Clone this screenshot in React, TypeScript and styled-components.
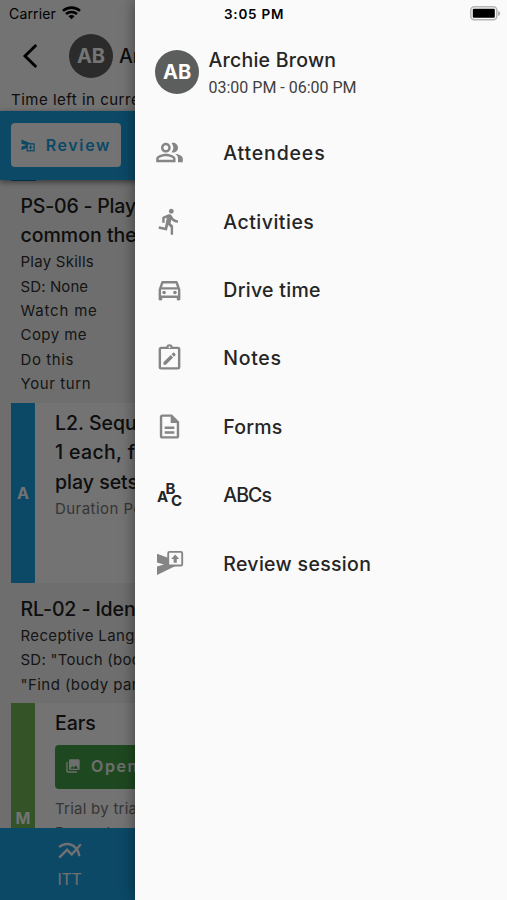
import React from "react";
import styled, { createGlobalStyle } from "styled-components";
import {
  MdOutlinePeopleAlt,
  MdDirectionsRun,
  MdOutlineDirectionsCar,
  MdOutlineDescription,
  MdMultilineChart,
  MdPhotoLibrary,
} from "react-icons/md";

const GlobalStyle = createGlobalStyle`
  * { box-sizing: border-box; }
  body { margin: 0; background: #fafafa; font-family: Inter, Roboto, sans-serif; }
`;

const Screen = styled.div`
  position: relative;
  width: 507px;
  height: 900px;
  overflow: hidden;
  background: #fafafa;
  white-space: nowrap;
`;

const Page = styled.main`
  display: flex;
  flex-direction: column;
  width: 507px;
  height: 900px;
  background: #f0f0f0;
  color: #202020;
`;

const Header = styled.header`
  flex: none;
  height: 111px;
  padding-top: 3px;
  background: #fafafa;
`;

const Carrier = styled.div`
  display: flex;
  align-items: center;
  gap: 6px;
  height: 20px;
  padding-left: 9px;
  font-size: 14px;
  letter-spacing: 0.15px;
  color: #000;
`;

const ClientRow = styled.div`
  display: flex;
  align-items: center;
  height: 65px;
  padding-left: 21px;
`;

const Avatar = styled.div<{ $color: string }>`
  flex: none;
  width: 44px;
  height: 44px;
  border-radius: 50%;
  background: ${(p) => p.$color};
  color: #fff;
  font: 700 20px/44px Inter, sans-serif;
  text-align: center;
`;

const ClientName = styled.div`
  margin-left: 6px;
  font-size: 19.5px;
  font-weight: 500;
`;

const TimeLeft = styled.div`
  padding-left: 11px;
  font-size: 15px;
  line-height: 24px;
  letter-spacing: 0.5px;
`;

const ActionBar = styled.div`
  position: relative;
  flex: none;
  height: 69px;
  padding: 12px 11px;
  background: #189fe0;
  box-shadow: 0 2px 6px rgba(0, 0, 0, 0.5);
`;

const Button = styled.button<{ $kind: "light" | "green" }>`
  display: flex;
  align-items: center;
  gap: ${(p) => (p.$kind === "light" ? 11 : 10)}px;
  width: ${(p) => (p.$kind === "light" ? 110 : 240)}px;
  height: 44px;
  padding: 0 10px 1px;
  border: 0;
  border-radius: 4px;
  background: ${(p) => (p.$kind === "light" ? "#fafafa" : "#43a047")};
  color: ${(p) => (p.$kind === "light" ? "#189fe0" : "#f0f0f0")};
  font: 600 16px/40px Inter, sans-serif;
  letter-spacing: 1.6px;
`;

const List = styled.div`
  flex: 1;
  min-height: 0;
  overflow: hidden;
`;

const PreviousCard = styled.div`
  width: 25px;
  height: 1px;
  margin-left: 11px;
  background: #189fe0;
`;

const Group = styled.section<{ $top: number; $height: number }>`
  height: ${(p) => p.$height}px;
  padding: ${(p) => p.$top}px 0 0 20.5px;
`;

const Title = styled.div<{ $spacing?: number }>`
  font-size: 19.5px;
  font-weight: 500;
  line-height: 29.3px;
  letter-spacing: ${(p) => p.$spacing ?? 0}px;
`;

const Detail = styled.div<{ $spacing?: number }>`
  font-size: 15px;
  line-height: 24.4px;
  letter-spacing: ${(p) => p.$spacing ?? 0.25}px;
  color: #303030;
`;

const Card = styled.article<{ $height: number }>`
  display: flex;
  height: ${(p) => p.$height}px;
  margin-left: 11px;
  background: #fafafa;
`;

const Stripe = styled.div<{ $color: string }>`
  display: flex;
  align-items: center;
  justify-content: center;
  width: 24px;
  background: ${(p) => p.$color};
  color: #fafafa;
  font-size: 16px;
  font-weight: 700;
`;

const CardBody = styled.div`
  padding: 6px 0 0 20px;
`;

const Muted = styled(Detail)`
  color: #757575;
`;

const ResultLine = styled(Muted)`
  line-height: 22.4px;
`;

const ButtonSlot = styled.div`
  padding: 6.5px 0 8.5px;
`;

const BottomBar = styled.nav`
  position: relative;
  flex: none;
  display: flex;
  height: 72px;
  background: #189fe0;
`;

const Tab = styled.div`
  display: flex;
  flex-direction: column;
  align-items: center;
  width: 139px;
  padding-top: 9px;
  color: #f5f5f5;
  font-size: 16px;
  letter-spacing: -0.4px;
  line-height: 29px;
`;

const Scrim = styled.div`
  position: absolute;
  inset: 0;
  background: rgba(0, 0, 0, 0.54);
`;

const Drawer = styled.aside`
  position: absolute;
  inset: 0 0 0 135.4px;
  display: flex;
  flex-direction: column;
  background: #fafafa;
  box-shadow: 0 0 14px rgba(0, 0, 0, 0.45);
  color: #252525;
`;

const StatusRow = styled.div`
  display: flex;
  align-items: center;
  justify-content: space-between;
  height: 27px;
  padding: 0 6px 0 88.6px;
  font-size: 13.5px;
  font-weight: 600;
  letter-spacing: 0.75px;
  color: #000;
`;

const Profile = styled.div`
  display: flex;
  gap: 9.4px;
  height: 92px;
  padding: 23px 0 0 19.7px;
`;

const ProfileText = styled.div`
  margin-top: -2px;
`;

const ProfileName = styled.div`
  font-size: 19.5px;
  font-weight: 500;
  line-height: 25px;
  letter-spacing: 0.25px;
`;

const Hours = styled.div`
  font: 16px/27px Roboto, sans-serif;
  padding-top: 1px;
  color: #404040;
`;

const MenuItem = styled.div`
  display: flex;
  align-items: center;
  height: 68.4px;
  padding-left: 19.7px;
`;

const MenuIcon = styled.div`
  display: flex;
  width: 68.2px;
  padding-bottom: 1px;
  color: #858585;
`;

const MenuLabel = styled.div<{ $spacing: number }>`
  font-size: 19.5px;
  font-weight: 500;
  letter-spacing: ${(p) => p.$spacing}px;
`;

const WifiIcon = () => (
  <svg width="19" height="14" viewBox="0 0 19 14" fill="none" stroke="#000" strokeWidth="2.6">
    <path d="M1 4.9C5.7.5 13.3.5 18 4.9M4 8.1c3.2-2.8 7.8-2.8 11 0" />
    <path d="m9.5 13.2-3-3c1.7-1.6 4.3-1.6 6 0Z" fill="#000" stroke="none" />
  </svg>
);

const BatteryIcon = () => (
  <svg width="31" height="15" viewBox="0 0 31 15">
    <rect x=".8" y=".8" width="26" height="13" rx="3.5" fill="#fafafa" stroke="#b5b5b5" strokeWidth="1.5" />
    <rect x="2.8" y="2.8" width="22" height="9" rx="1" fill="#000" />
    <path d="M28 5c3 1 3 4 0 5Z" fill="#b5b5b5" />
  </svg>
);

const BackIcon = () => (
  <svg width="48" height="28" viewBox="0 0 48 28" fill="none" stroke="#000" strokeWidth="2.9">
    <path d="M15.2 3 4 14l11.2 11" />
  </svg>
);

const NotesIcon = () => (
  <svg width="29" height="29" viewBox="0 0 24 24" fill="currentColor">
    <path
      fillRule="evenodd"
      d="M5 3h4.2a3 3 0 0 1 5.6 0H19a2 2 0 0 1 2 2v15a2 2 0 0 1-2 2H5a2 2 0 0 1-2-2V5c0-1.1.9-2 2-2Zm0 2v15h14V5H5Zm7-2.3a.8.8 0 1 0 0 1.6.8.8 0 0 0 0-1.6Z"
    />
    <path d="M7 16v2h2l6-6-2-2ZM15.7 11.3l1.2-1.2c.3-.3.3-.6 0-.9l-1.1-1.1c-.3-.3-.6-.3-.9 0l-1.2 1.2Z" />
  </svg>
);

const AbcIcon = () => (
  <svg width="29" height="29" viewBox="0 0 29 29" fill="#252525" fontFamily="Inter, sans-serif" fontWeight="700">
    <text x="2" y="22" fontSize="15">A</text>
    <text x="10.5" y="14" fontSize="15">B</text>
    <text x="16" y="26.3" fontSize="15">C</text>
  </svg>
);

const ReviewIcon = () => (
  <svg width="29" height="29" viewBox="0 0 29 29">
    <path d="M2 4.8 13 8.8v8H21L2 26V17.6l7-2.2-7-2Z" fill="#858585" />
    <rect x="13.2" y="2.9" width="14" height="13.6" rx="1.3" fill="#fafafa" stroke="#858585" strokeWidth="1.9" />
    <path d="m20.2 5.6 4 4.3h-2.4v3.9h-3.2v-3.9h-2.4Z" fill="#858585" />
  </svg>
);

const SendReviewIcon = () => (
  <svg width="16" height="16" viewBox="0 0 16 16">
    <path d="M.5 1.5 13 6.8V9L.5 14V10l6-2-6-1.5Z" fill="#189fe0" />
    <rect x="7.2" y="6.7" width="8" height="8" fill="#fafafa" stroke="#189fe0" strokeWidth="1.5" />
    <path d="M11.2 8.3v4.8M9.2 10.6h4" stroke="#189fe0" strokeWidth="1.3" />
  </svg>
);

const menu = [
  { label: "Attendees", icon: <MdOutlinePeopleAlt size={29} />, spacing: 0.85 },
  { label: "Activities", icon: <MdDirectionsRun size={29} />, spacing: 0.5 },
  { label: "Drive time", icon: <MdOutlineDirectionsCar size={29} />, spacing: 0.3 },
  { label: "Notes", icon: <NotesIcon />, spacing: 0.7 },
  { label: "Forms", icon: <MdOutlineDescription size={29} />, spacing: 0.2 },
  { label: "ABCs", icon: <AbcIcon />, spacing: -0.9 },
  { label: "Review session", icon: <ReviewIcon />, spacing: 0.32 },
];

export default function App() {
  return (
    <Screen>
      <GlobalStyle />
      <Page>
        <Header>
          <Carrier>
            Carrier <WifiIcon />
          </Carrier>
          <ClientRow>
            <BackIcon />
            <Avatar $color="#5c5e5d">AB</Avatar>
            <ClientName>Archie Brown</ClientName>
          </ClientRow>
          <TimeLeft>Time left in current session</TimeLeft>
        </Header>
        <ActionBar>
          <Button $kind="light">
            <SendReviewIcon />
            Review
          </Button>
        </ActionBar>
        <List>
          <PreviousCard />
          <Group $top={10.5} $height={222}>
            <Title $spacing={-0.2}>PS-06 - Plays with</Title>
            <Title>common theme toys</Title>
            <Detail>Play Skills</Detail>
            <Detail $spacing={0.1}>SD: None</Detail>
            <Detail $spacing={0.8}>Watch me</Detail>
            <Detail $spacing={0.45}>Copy me</Detail>
            <Detail $spacing={0.6}>Do this</Detail>
            <Detail $spacing={0.6}>Your turn</Detail>
          </Group>
          <Card $height={180}>
            <Stripe $color="#189fe0">A</Stripe>
            <CardBody>
              <Title>L2. Sequence</Title>
              <Title $spacing={0.35}>1 each, for</Title>
              <Title>play sets</Title>
              <Muted $spacing={0.45}>Duration Per</Muted>
            </CardBody>
          </Card>
          <Group $top={11.5} $height={120}>
            <Title $spacing={-0.1}>RL-02 - Identify</Title>
            <Detail $spacing={0.35}>Receptive Language</Detail>
            <Detail>SD: "Touch (body part)"</Detail>
            <Detail $spacing={0.45}>"Find (body part)"</Detail>
          </Group>
          <Card $height={230}>
            <Stripe $color="#71b856">M</Stripe>
            <CardBody>
              <Title>Ears</Title>
              <ButtonSlot>
                <Button $kind="green">
                  <MdPhotoLibrary size={16} />
                  Open
                </Button>
              </ButtonSlot>
              <Muted>Trial by trial</Muted>
              <ResultLine>Percentage</ResultLine>
            </CardBody>
          </Card>
        </List>
        <BottomBar>
          <Tab>
            <MdMultilineChart size={28} />
            ITT
          </Tab>
        </BottomBar>
      </Page>
      <Scrim />
      <Drawer>
        <StatusRow>
          3:05 PM <BatteryIcon />
        </StatusRow>
        <Profile>
          <Avatar $color="#5c5e5d">AB</Avatar>
          <ProfileText>
            <ProfileName>Archie Brown</ProfileName>
            <Hours>03:00 PM - 06:00 PM</Hours>
          </ProfileText>
        </Profile>
        {menu.map((item) => (
          <MenuItem key={item.label}>
            <MenuIcon>{item.icon}</MenuIcon>
            <MenuLabel $spacing={item.spacing}>{item.label}</MenuLabel>
          </MenuItem>
        ))}
      </Drawer>
    </Screen>
  );
}
